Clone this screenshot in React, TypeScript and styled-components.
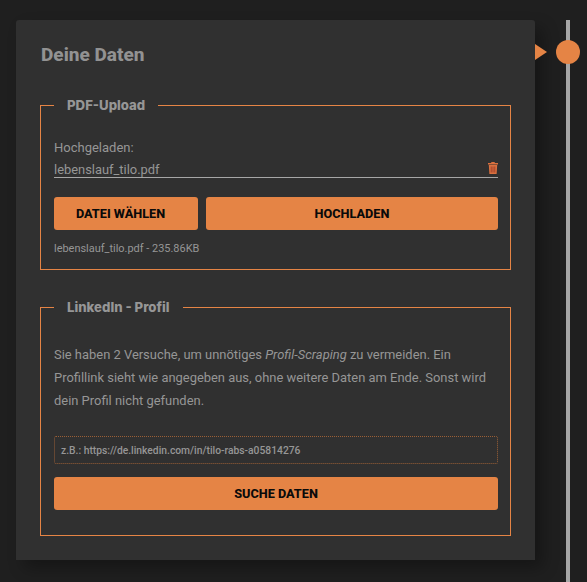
import React from 'react';
import styled, { createGlobalStyle } from 'styled-components';

const GlobalStyle = createGlobalStyle`
  html, body {
    margin: 0;
    padding: 0;
    height: 100%;
    background: #1f1f1f;
    overflow: hidden;
  }
  * {
    box-sizing: border-box;
  }
`;

const Page = styled.div`
  display: flex;
  align-items: stretch;
  height: 582px;
  padding: 20px 0 0 16px;
  font-family: Roboto, sans-serif;
`;

const Card = styled.section`
  position: relative;
  width: 519px;
  height: 540px;
  padding: 23px 24px 0;
  background: #303030;
  border-radius: 3px 3px 0 0;
  box-shadow: 8px 8px 16px rgba(0, 0, 0, 0.3);

  &::after {
    content: '';
    position: absolute;
    top: 24px;
    left: 100%;
    border-style: solid;
    border-width: 8px 0 8px 12px;
    border-color: transparent transparent transparent #e58445;
  }
`;

const Title = styled.h2`
  margin: 0 0 30px 1px;
  font-size: 19px;
  line-height: 24px;
  font-weight: 800;
  color: #929292;
`;

const Group = styled.fieldset<{ $height: number }>`
  height: ${props => props.$height}px;
  margin: 0 0 29px;
  padding: 0 12px 0 13px;
  border: 1px solid #e58445;
  min-width: 0;
`;

const Legend = styled.legend`
  margin-left: 0;
  padding: 0 13px;
  font-family: Inter, sans-serif;
  font-size: 13.2px;
  line-height: 16px;
  font-weight: 800;
  color: #969696;
`;

const Label = styled.div`
  margin-top: 25px;
  font-size: 13px;
  line-height: 20px;
  color: #969696;
`;

const FileRow = styled.div`
  display: flex;
  align-items: center;
  justify-content: space-between;
  height: 20px;
  padding-top: 4px;
  border-bottom: 1px solid #a6a6a6;
  font-size: 12.9px;
  color: #969696;
`;

const Trash = styled.svg`
  display: block;
  width: 10px;
  height: 12px;
  margin-top: -4px;
`;

const ButtonRow = styled.div`
  display: flex;
  gap: 8px;
  margin-top: 19px;
`;

const ActionButton = styled.button<{ $wide?: boolean }>`
  flex: ${props => (props.$wide ? '1' : '0 0 144px')};
  height: 33px;
  padding: ${props => (props.$wide ? '0' : '0 11px 0 0')};
  border: none;
  border-radius: 3px;
  background: #e58445;
  color: #0a0a0a;
  font-family: Roboto, sans-serif;
  font-size: 12.7px;
  font-weight: 800;
`;

const FileInfo = styled.div`
  margin-top: 11px;
  font-size: 10.95px;
  line-height: 16px;
  color: #969696;
`;

const Intro = styled.p`
  margin: 28px 0 0;
  font-size: 12.93px;
  line-height: 23px;
  color: #969696;
`;

const UrlInput = styled.div`
  display: flex;
  align-items: center;
  height: 28px;
  margin-top: 24px;
  padding: 0 6px;
  border: 1px dotted #9a5f36;
  border-radius: 2px;
  font-size: 10.3px;
  font-weight: 500;
  color: #969696;
`;

const FullButton = styled(ActionButton)`
  display: block;
  width: 100%;
  margin-top: 13px;
  padding: 0;
`;

const Timeline = styled.div`
  position: relative;
  flex: 0 0 4px;
  margin-left: 31px;
  background: #a6a6a6;
`;

const Dot = styled.span`
  position: absolute;
  top: 20px;
  left: -10px;
  width: 24px;
  height: 24px;
  border-radius: 50%;
  background: #e58445;
`;

const App: React.FC = () => (
  <>
    <GlobalStyle />
    <Page>
      <Card>
        <Title>Deine Daten</Title>
        <Group $height={173}>
          <Legend>PDF-Upload</Legend>
          <Label>Hochgeladen:</Label>
          <FileRow>
            lebenslauf_tilo.pdf
            <Trash viewBox="0 0 10 12" aria-hidden="true">
              <path d="M3.5 0h3l.5 1H10v1.4H0V1h3z" fill="#d9703f" />
              <path d="M.8 3h8.4L8.6 12H1.4z" fill="#d9703f" />
              <path d="M2.7 4.5h1v6h-1zM4.5 4.5h1v6h-1zM6.3 4.5h1v6h-1z" fill="#a3432c" />
            </Trash>
          </FileRow>
          <ButtonRow>
            <ActionButton>DATEI WÄHLEN</ActionButton>
            <ActionButton $wide>HOCHLADEN</ActionButton>
          </ButtonRow>
          <FileInfo>lebenslauf_tilo.pdf - 235.86KB</FileInfo>
        </Group>
        <Group $height={237}>
          <Legend>LinkedIn - Profil</Legend>
          <Intro>
            Sie haben 2 Versuche, um unnötiges <em>Profil-Scraping</em> zu vermeiden. Ein
            Profillink sieht wie angegeben aus, ohne weitere Daten am Ende. Sonst wird
            dein Profil nicht gefunden.
          </Intro>
          <UrlInput>z.B.: https://de.linkedin.com/in/tilo-rabs-a05814276</UrlInput>
          <FullButton>SUCHE DATEN</FullButton>
        </Group>
      </Card>
      <Timeline>
        <Dot />
      </Timeline>
    </Page>
  </>
);

export default App;
